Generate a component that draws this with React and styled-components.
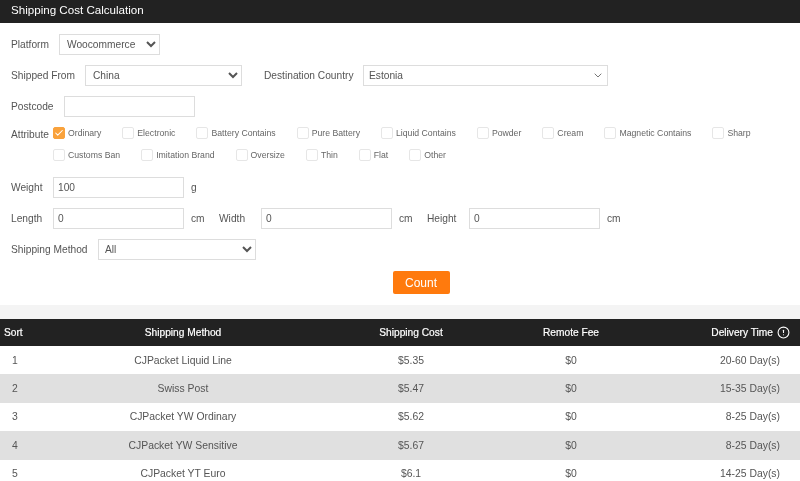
import React from "react";
import styled, { createGlobalStyle } from "styled-components";
import { CircleAlert, Check } from "lucide-react";

const attributes = [
  "Ordinary",
  "Electronic",
  "Battery Contains",
  "Pure Battery",
  "Liquid Contains",
  "Powder",
  "Cream",
  "Magnetic Contains",
  "Sharp",
  "Customs Ban",
  "Imitation Brand",
  "Oversize",
  "Thin",
  "Flat",
  "Other",
];

const results = [
  { method: "CJPacket Liquid Line", cost: "$5.35", fee: "$0", time: "20-60 Day(s)" },
  { method: "Swiss Post", cost: "$5.47", fee: "$0", time: "15-35 Day(s)" },
  { method: "CJPacket YW Ordinary", cost: "$5.62", fee: "$0", time: "8-25 Day(s)" },
  { method: "CJPacket YW Sensitive", cost: "$5.67", fee: "$0", time: "8-25 Day(s)" },
  { method: "CJPacket YT Euro", cost: "$6.1", fee: "$0", time: "14-25 Day(s)" },
];

const App = () => {
  return (
    <Page>
      <GlobalStyle />
      <TitleBar>Shipping Cost Calculation</TitleBar>
      <Form>
        <Row>
          <Label $width={48}>Platform</Label>
          <Select $width={101} $pad={3} defaultValue="Woocommerce">
            <option>Woocommerce</option>
          </Select>
        </Row>
        <Row>
          <Label $width={74}>Shipped From</Label>
          <Select $width={157} $pad={3} defaultValue="China">
            <option>China</option>
          </Select>
          <Label $left={22} $width={99}>
            Destination Country
          </Label>
          <CountrySelect $width={245} $pad={5} defaultValue="Estonia">
            <option>Estonia</option>
          </CountrySelect>
        </Row>
        <Row>
          <Label $width={53}>Postcode</Label>
          <Input $width={131} />
        </Row>
        <AttributeRow>
          <AttributeLabel $width={42}>Attribute</AttributeLabel>
          <AttributeList>
            {attributes.map((name, i) => (
              <Attribute key={name}>
                <Box $checked={i === 0}>
                  {i === 0 && <Check size={10} strokeWidth={2.5} color="#fff" />}
                </Box>
                {name}
              </Attribute>
            ))}
          </AttributeList>
        </AttributeRow>
        <Row $top={6}>
          <Label $width={42}>Weight</Label>
          <Input $width={131} defaultValue="100" />
          <Unit>g</Unit>
        </Row>
        <Row>
          <Label $width={42}>Length</Label>
          <Input $width={131} defaultValue="0" />
          <Unit>cm</Unit>
          <Label $left={7} $width={42}>
            Width
          </Label>
          <Input $width={131} defaultValue="0" />
          <Unit>cm</Unit>
          <Label $left={7} $width={42}>
            Height
          </Label>
          <Input $width={131} defaultValue="0" />
          <Unit>cm</Unit>
        </Row>
        <Row>
          <Label $width={87}>Shipping Method</Label>
          <Select $width={158} $pad={2} defaultValue="All">
            <option>All</option>
          </Select>
        </Row>
        <Actions>
          <CountButton>Count</CountButton>
        </Actions>
      </Form>
      <Band />
      <Table>
        <HeadRow>
          <SortCell>Sort</SortCell>
          <Cell>Shipping Method</Cell>
          <Cell>Shipping Cost</Cell>
          <Cell>Remote Fee</Cell>
          <TimeHead>
            Delivery Time <CircleAlert size={13} strokeWidth={2} />
          </TimeHead>
        </HeadRow>
        {results.map((row, i) => (
          <BodyRow key={row.method} $striped={i % 2 === 1}>
            <SortCell $body>{i + 1}</SortCell>
            <Cell>{row.method}</Cell>
            <Cell>{row.cost}</Cell>
            <Cell>{row.fee}</Cell>
            <TimeCell>{row.time}</TimeCell>
          </BodyRow>
        ))}
      </Table>
    </Page>
  );
};

export default App;

const GlobalStyle = createGlobalStyle`
  html, body {
    margin: 0;
    overflow: hidden;
    background: #fff;
  }
  * {
    box-sizing: border-box;
  }
`;

const Page = styled.div`
  font-family: "Liberation Sans", Arial, sans-serif;
  font-size: 10.2px;
  color: #555;
  will-change: transform;
`;

const TitleBar = styled.div`
  height: 23px;
  line-height: 20px;
  padding-left: 11px;
  background: #222;
  color: #fff;
  font-size: 11.6px;
`;

const Form = styled.div`
  display: flex;
  flex-direction: column;
  gap: 10px;
  padding: 11px;
`;

const Row = styled.div`
  display: flex;
  align-items: center;
  height: 21px;
  margin-top: ${(props) => props.$top || 0}px;
`;

const Label = styled.span`
  flex: none;
  width: ${(props) => props.$width}px;
  margin-left: ${(props) => props.$left || 0}px;
  white-space: nowrap;
`;

const AttributeLabel = styled(Label)`
  padding-top: 2px;
`;

const Select = styled.select`
  width: ${(props) => props.$width}px;
  height: 21px;
  padding: 0 0 0 ${(props) => props.$pad}px;
  border: 1px solid #ddd;
  border-radius: 0;
  background-color: #fff;
  color: #555;
  font-family: inherit;
  font-size: 10.2px;
  outline: none;
`;

const CountrySelect = styled(Select)`
  appearance: none;
  background-image: url("data:image/svg+xml,%3Csvg xmlns='http://www.w3.org/2000/svg' width='8' height='5'%3E%3Cpath d='M.7.7 4 4 7.3.7' fill='none' stroke='%23777' stroke-width='1'/%3E%3C/svg%3E");
  background-repeat: no-repeat;
  background-position: right 5px center;
`;

const Input = styled.input`
  width: ${(props) => props.$width}px;
  height: 21px;
  padding: 0 4px;
  border: 1px solid #ddd;
  color: #555;
  font-family: inherit;
  font-size: 10.2px;
  outline: none;
`;

const Unit = styled.span`
  width: 28px;
  padding-left: 7px;
`;

const AttributeRow = styled.div`
  display: flex;
  align-items: flex-start;
`;

const AttributeList = styled.div`
  display: flex;
  flex-wrap: wrap;
  gap: 10px 21px;
  width: 720px;
`;

const Attribute = styled.label`
  display: flex;
  align-items: center;
  gap: 3px;
  height: 12px;
  font-size: 8.7px;
  color: #666;
`;

const Box = styled.span`
  display: flex;
  align-items: center;
  justify-content: center;
  width: 12px;
  height: 12px;
  border: 1px solid ${(props) => (props.$checked ? "#f9a23c" : "#e6e6e6")};
  border-radius: 2px;
  background: ${(props) => (props.$checked ? "#f9a23c" : "#fff")};
`;

const Actions = styled.div`
  display: flex;
  justify-content: center;
  margin-top: 1px;
  padding-left: 42px;
`;

const CountButton = styled.button`
  width: 57px;
  height: 23px;
  border: none;
  border-radius: 2px;
  background: #ff7a0d;
  color: #fff;
  font-family: inherit;
  font-size: 12px;
`;

const Band = styled.div`
  height: 14px;
  background: #f4f4f4;
`;

const Table = styled.div`
  display: flex;
  flex-direction: column;
`;

const gridColumns = "28px 310px 146px 174px 142px";

const HeadRow = styled.div`
  display: grid;
  grid-template-columns: ${gridColumns};
  align-items: center;
  height: 27px;
  background: #222;
  color: #fff;
  font-size: 10.2px;
  -webkit-text-stroke: 0.2px #fff;
`;

const BodyRow = styled.div`
  display: grid;
  grid-template-columns: ${gridColumns};
  align-items: center;
  height: 28.4px;
  background: ${(props) => (props.$striped ? "#e0e0e0" : "#fff")};
  color: #555;
  font-size: 10.4px;
`;

const Cell = styled.div`
  text-align: center;
`;

const SortCell = styled.div`
  padding-left: ${(props) => (props.$body ? 12 : 4)}px;
`;

const TimeHead = styled.div`
  display: flex;
  align-items: center;
  justify-content: flex-end;
  gap: 4px;
  padding-right: 10px;
`;

const TimeCell = styled.div`
  text-align: right;
  padding-right: 20px;
`;
